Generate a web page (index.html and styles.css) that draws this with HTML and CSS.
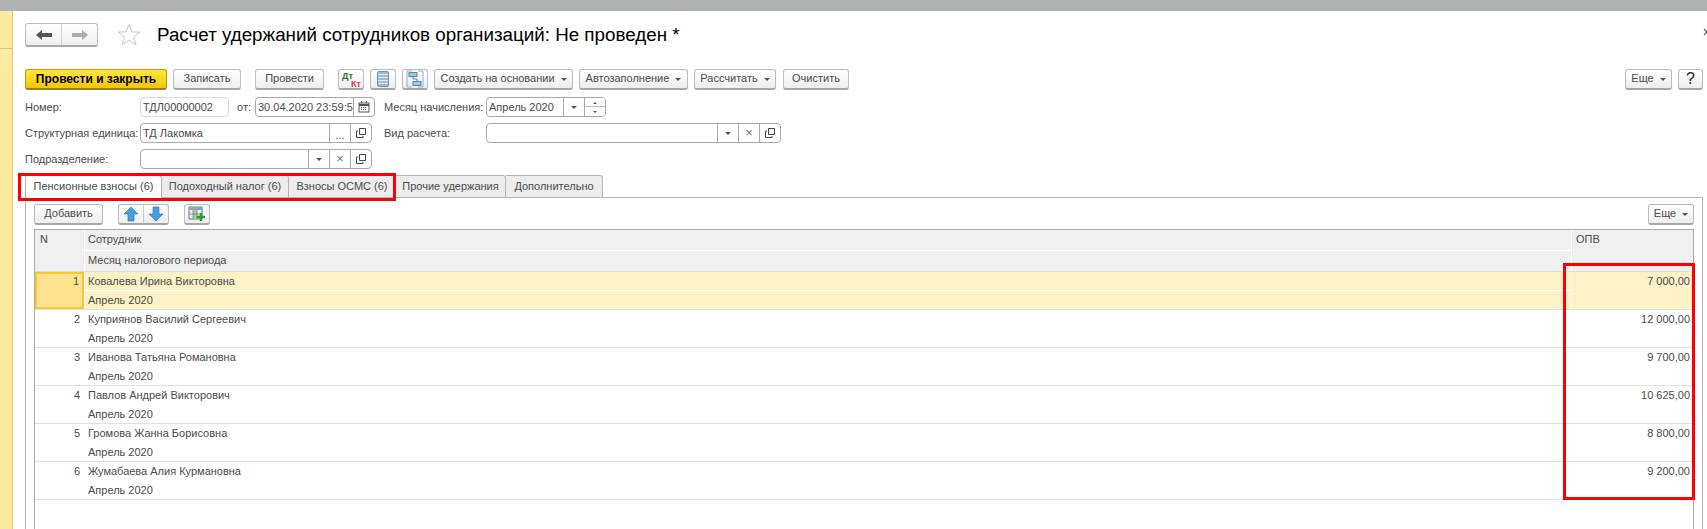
FILE: index.html
```html
<!DOCTYPE html>
<html lang="ru">
<head>
<meta charset="utf-8">
<title>Расчет удержаний</title>
<link rel="stylesheet" href="styles.css">
</head>
<body>
<div class="app">
  <div class="topbar"></div>
  <div class="main">
    <aside class="side"><div class="side-top"></div></aside>
    <div class="form">
      <header class="head">
        <div class="nav">
          <button class="nav-btn"><svg width="18" height="12" viewBox="0 0 18 12"><path d="M1 6 7 1V4H17V8H7V11Z" fill="#555"/></svg></button>
          <button class="nav-btn nav-fwd"><svg width="18" height="12" viewBox="0 0 18 12"><path d="M17 6 11 1V4H1V8H11V11Z" fill="#adadad"/></svg></button>
        </div>
        <svg class="star" width="24" height="24" viewBox="0 0 24 24"><path d="M12 1.500 15 9H23L16.600 13.800 19 22 12 17.200 5 22 7.400 13.800 1 9H9Z" fill="#fff" stroke="#c9c9c9"/></svg>
        <h1 class="title">Расчет удержаний сотрудников организаций: Не проведен *</h1>
      </header>
      <div class="toolbar">
        <button class="btn primary w142">Провести и закрыть</button>
        <button class="btn w68 ml6">Записать</button>
        <button class="btn w69 ml14">Провести</button>
        <button class="btn icon ml14"><span class="dtkt"><span class="dt">Дт</span><span class="kt">Кт</span></span></button>
        <button class="btn icon ml6"><svg width="14" height="18" viewBox="0 0 14 18"><rect x="1.500" y="1.500" width="11" height="15" rx="1" fill="#9dbad0" stroke="#6c90ac"/><path d="M2 4.500H12M2 7.500H12M2 10.500H12M2 13.500H12" stroke="#e4edf3"/></svg></button>
        <button class="btn icon ml6"><svg width="18" height="18" viewBox="0 0 18 18" fill="none"><path d="M6 1H1V17H6M12 1H17V17H12" stroke="#8fb0c8"/><rect x="3" y="2.500" width="8" height="4" fill="#a8c6dc" stroke="#4f86ad"/><rect x="7" y="11.500" width="8" height="4" fill="#a8c6dc" stroke="#4f86ad"/><path d="M7 6.500V9H11V11.500" stroke="#4f86ad"/></svg></button>
        <button class="btn w139 ml6">Создать на основании<i class="caret"></i></button>
        <button class="btn w109 ml6">Автозаполнение<i class="caret"></i></button>
        <button class="btn w82 ml6">Рассчитать<i class="caret"></i></button>
        <button class="btn w66 ml7">Очистить</button>
        <button class="btn w47 push">Еще<i class="caret"></i></button>
        <button class="btn help ml6">?</button>
      </div>
      <div class="fields">
        <label class="lbl">Номер:</label>
        <div class="cell">
          <div class="field ro w89"><span class="val">ТДЛ00000002</span></div>
          <span class="lbl from">от:</span>
          <div class="field w120"><span class="val">30.04.2020 23:59:59</span><span class="fb"><svg width="12" height="12" viewBox="0 0 12 12"><rect x="1" y="2" width="10" height="9" fill="#fff" stroke="#555"/><path d="M1 4H11" stroke="#555" stroke-width="2"/><path d="M3 6.500H9M3 8.500H9" stroke="#555" stroke-dasharray="1 1"/><path d="M3.500 0V2M8.500 0V2" stroke="#555"/></svg></span></div>
        </div>
        <label class="lbl">Месяц начисления:</label>
        <div class="cell">
          <div class="field w120"><span class="val">Апрель 2020</span><span class="fb"><i class="drop"></i></span><span class="fb spin"><i class="tick up"></i><i class="tick dn"></i></span></div>
        </div>

        <label class="lbl">Структурная единица:</label>
        <div class="cell">
          <div class="field w232"><span class="val">ТД Лакомка</span><span class="fb dots">...</span><span class="fb"><svg class="open" width="12" height="12" viewBox="0 0 12 12" fill="none"><path d="M4.500 1.500H10.500V7.500H4.500Z M3 4H1.500V10.500H8V9" stroke="#444"/></svg></span></div>
        </div>
        <label class="lbl">Вид расчета:</label>
        <div class="cell">
          <div class="field w295"><span class="val"></span><span class="fb"><i class="drop"></i></span><span class="fb clr">×</span><span class="fb"><svg class="open" width="12" height="12" viewBox="0 0 12 12" fill="none"><path d="M4.500 1.500H10.500V7.500H4.500Z M3 4H1.500V10.500H8V9" stroke="#444"/></svg></span></div>
        </div>

        <label class="lbl">Подразделение:</label>
        <div class="cell">
          <div class="field w232"><span class="val"></span><span class="fb"><i class="drop"></i></span><span class="fb clr">×</span><span class="fb"><svg class="open" width="12" height="12" viewBox="0 0 12 12" fill="none"><path d="M4.500 1.500H10.500V7.500H4.500Z M3 4H1.500V10.500H8V9" stroke="#444"/></svg></span></div>
        </div>
      </div>
      <nav class="tabs">
        <div class="tab active t137">Пенсионные взносы (6)</div>
        <div class="tab t127">Подоходный налог (6)</div>
        <div class="tab t107">Взносы ОСМС (6)</div>
        <div class="tab t110">Прочие удержания</div>
        <div class="tab t97">Дополнительно</div>
      </nav>
      <section class="panel">
        <div class="ptools">
          <button class="btn w69">Добавить</button>
          <div class="arrows ml15">
            <button class="arrow"><svg width="16" height="16" viewBox="0 0 16 16"><path d="M8 1 15 8H11V15H5V8H1Z" fill="#46a0dc" stroke="#2f7fb8" stroke-width=".7"/></svg></button>
            <button class="arrow"><svg width="16" height="16" viewBox="0 0 16 16"><path d="M8 15 15 8H11V1H5V8H1Z" fill="#46a0dc" stroke="#2f7fb8" stroke-width=".7"/></svg></button>
          </div>
          <button class="btn icon ml15"><svg width="18" height="16" viewBox="0 0 18 16"><rect x="1" y="1" width="13" height="12" fill="#e6eef0" stroke="#5f7f90"/><rect x="1" y="1" width="13" height="3" fill="#8fa9b8"/><rect x="5" y="4" width="4" height="9" fill="#a9cc96"/><path d="M5 4V13M9 4V13M1 8H14" stroke="#5f7f90" stroke-width=".7"/><path d="M13 7V15M9 11H17" stroke="#2f9a2f" stroke-width="2.400"/></svg></button>
          <button class="btn w46 push">Еще<i class="caret"></i></button>
        </div>
        <div class="table">
          <div class="thead">
            <div class="th n">N</div>
            <div class="th">Сотрудник</div>
            <div class="th v">ОПВ</div>
            <div class="th">Месяц налогового периода</div>
          </div>
          <div class="row sel"><div class="c n">1</div><div class="c">Ковалева Ирина Викторовна</div><div class="c v">7 000,00</div><div class="c">Апрель 2020</div></div>
          <div class="row"><div class="c n">2</div><div class="c">Куприянов Василий Сергеевич</div><div class="c v">12 000,00</div><div class="c">Апрель 2020</div></div>
          <div class="row"><div class="c n">3</div><div class="c">Иванова Татьяна Романовна</div><div class="c v">9 700,00</div><div class="c">Апрель 2020</div></div>
          <div class="row"><div class="c n">4</div><div class="c">Павлов Андрей Викторович</div><div class="c v">10 625,00</div><div class="c">Апрель 2020</div></div>
          <div class="row"><div class="c n">5</div><div class="c">Громова Жанна Борисовна</div><div class="c v">8 800,00</div><div class="c">Апрель 2020</div></div>
          <div class="row"><div class="c n">6</div><div class="c">Жумабаева Алия Курмановна</div><div class="c v">9 200,00</div><div class="c">Апрель 2020</div></div>
        </div>
      </section>
    </div>
  </div>
  <span class="close">×</span>
  <div class="mark mark-tabs"></div>
  <div class="mark mark-col"></div>
</div>
</body>
</html>
```

FILE: styles.css
```css
* { box-sizing: border-box; }
html, body { margin: 0; height: 100%; }
body { font: 11px/1.2 "Liberation Sans", Arial, sans-serif; color: #4b4b4b; background: #fff; overflow: hidden; }
button { font: inherit; color: inherit; margin: 0; padding: 0; }
i { font-style: normal; }

.app { position: relative; width: 1707px; height: 529px; display: flex; flex-direction: column; overflow: hidden; }
.topbar { height: 11px; flex: none; background: #b0b1b3; }
.main { flex: 1; display: flex; min-height: 0; }
.side { width: 13px; flex: none; background: #fbeb9f; border-right: 1px solid #dcc76c; }
.side-top { height: 38px; border-bottom: 1px solid #dcc76c; }
.form { flex: 1; min-width: 0; display: flex; flex-direction: column; padding: 12px 4px 0 12px; }

.head { display: flex; align-items: center; height: 24px; flex: none; }
.nav { display: flex; width: 73px; height: 24px; border: 1px solid #bdbdbd; border-bottom: 2px solid #a9a9a9; border-radius: 3px; background: linear-gradient(#fff, #efefef); }
.nav-btn { flex: 1; border: 0; background: none; display: flex; align-items: center; justify-content: center; }
.nav-fwd { border-left: 1px solid #d4d4d4; }
.star { margin-left: 19px; flex: none; }
.title { margin: 0 0 0 16px; font-size: 18.800px; font-weight: 400; color: #000; line-height: 24px; white-space: nowrap; }

.toolbar { display: flex; height: 21px; margin-top: 22px; flex: none; }
.btn { height: 21px; border: 1px solid #bbb; border-bottom: 2px solid #a6a6a6; border-radius: 3px; background: linear-gradient(#fff, #eee); display: inline-flex; align-items: center; justify-content: center; white-space: nowrap; flex: none; }
.btn.primary { background: linear-gradient(#ffe73d, #f7c600); border-color: #b79a1f #b79a1f #97801c; color: #000; font-weight: 700; font-size: 12px; }
.icon { width: 26px; }
.help { width: 25px; font-size: 16px; color: #222; }
.caret { width: 0; height: 0; margin-left: 6px; border: 3px solid transparent; border-top: 3px solid #555; border-bottom: 0; }
.w142 { width: 142px; } .w139 { width: 139px; } .w109 { width: 109px; } .w82 { width: 82px; }
.w69 { width: 69px; } .w68 { width: 68px; } .w66 { width: 66px; } .w47 { width: 47px; } .w46 { width: 46px; }
.ml6 { margin-left: 6px; } .ml7 { margin-left: 7px; } .ml14 { margin-left: 14px; } .ml15 { margin-left: 15px; }
.push { margin-left: auto; }

.dtkt { display: flex; flex-direction: column; font: bold 9px/8px "Liberation Sans", sans-serif; width: 20px; padding-top: 2px; }
.dt { color: #1f7a1f; align-self: flex-start; margin-left: 1px; }
.kt { color: #f03a3a; align-self: flex-end; }

.fields { display: grid; grid-template-columns: 115px 244px 102px 1fr; grid-auto-rows: 20px; row-gap: 6px; margin-top: 7px; flex: none; }
.lbl { line-height: 20px; white-space: nowrap; }
.from { margin: 0 8px; width: 10px; flex: none; }
.cell { display: flex; }
.field { display: flex; height: 20px; border: 1px solid #a9a9a9; border-radius: 4px; background: #fff; overflow: hidden; }
.field.ro { border-color: #dcdcdc; }
.val { flex: 1; min-width: 0; padding-left: 2px; line-height: 18px; white-space: nowrap; overflow: hidden; }
.fb { width: 21px; flex: none; border-left: 1px solid #a9a9a9; display: flex; align-items: center; justify-content: center; }
.w89 { width: 89px; } .w120 { width: 120px; } .w232 { width: 232px; } .w295 { width: 295px; }
.drop { width: 0; height: 0; border: 3px solid transparent; border-top: 3px solid #555; border-bottom: 0; }
.clr { color: #777; font-size: 13px; }
.dots { align-items: flex-end; line-height: 14px; color: #555; }
.spin { flex-direction: column; background: linear-gradient(#fff 8px, #bbb 8px, #bbb 9px, #fff 9px); gap: 7px; }
.tick { width: 0; height: 0; border: 2px solid transparent; }
.tick.up { border-bottom: 2px solid #555; border-top: 0; }
.tick.dn { border-top: 2px solid #555; border-bottom: 0; }

.tabs { display: flex; height: 23px; margin-top: 6px; flex: none; position: relative; z-index: 1; }
.tab { height: 23px; border: 1px solid #b3b3b3; border-left: 0; border-radius: 0 3px 0 0; background: #ececec; line-height: 21px; text-align: center; white-space: nowrap; }
.tab.active { background: #fff; border-left: 1px solid #b3b3b3; border-bottom: 0; }
.t137 { width: 137px; } .t127 { width: 127px; } .t107 { width: 107px; } .t110 { width: 110px; } .t97 { width: 97px; }

.panel { flex: 1; min-height: 0; margin-top: -1px; border: 1px solid #b3b3b3; border-bottom: 0; padding: 6px 8px 0; display: flex; flex-direction: column; }
.ptools { display: flex; height: 21px; flex: none; }
.arrows { display: flex; width: 51px; height: 21px; border: 1px solid #bbb; border-bottom: 2px solid #a6a6a6; border-radius: 3px; background: linear-gradient(#fff, #eee); }
.arrow { flex: 1; border: 0; background: none; display: flex; align-items: center; justify-content: center; }
.arrow + .arrow { border-left: 1px solid #c9c9c9; }

.table { flex: 1; margin-top: 4px; border: 1px solid #a9a9a9; border-bottom: 0; }
.thead { display: grid; grid-template-columns: 49px 1fr 121px; grid-template-rows: 20px 20px; gap: 1px; background: #fff; border-bottom: 1px solid #dedede; height: 42px; }
.th { background: #f0f0f0; padding: 2px 3px; white-space: nowrap; line-height: 15px; }
.th.n, .th.v { grid-row: span 2; padding-left: 5px; }
.th.v { padding-left: 4px; }
.row { display: grid; grid-template-columns: 49px 1fr 121px; grid-template-rows: 19px 18px; height: 38px; border-bottom: 1px solid #e2e2e2; column-gap: 1px; }
.c { line-height: 19px; padding-left: 3px; white-space: nowrap; }
.c.n, .c.v { grid-row: span 2; text-align: right; padding-right: 4px; }
.c.v { padding-right: 3px; }
.row.sel .c { background: #fdf1c6; }
.row.sel .c:nth-child(2) { border-bottom: 1px solid #fff; }
.row.sel .c.n { background: #ffe28d; border: 2px solid #f9c62d; padding-right: 3px; line-height: 15px; }

.close { position: absolute; top: 24px; right: -4px; font-size: 14px; color: #444; }
.mark { position: absolute; border: 3px solid #f00; pointer-events: none; z-index: 2; }
.mark-tabs { left: 18px; top: 173px; width: 378px; height: 28px; }
.mark-col { left: 1563px; top: 263px; width: 132px; height: 237px; }
```
